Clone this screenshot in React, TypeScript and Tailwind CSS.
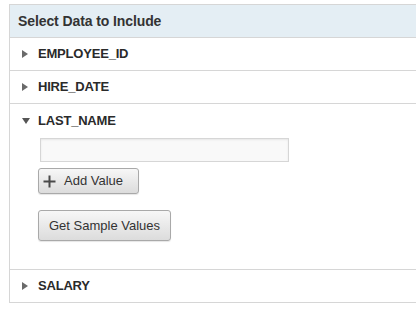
import React from "react";

const Right = () => (
  <svg width="6" height="8" viewBox="0 0 6 8" className="shrink-0">
    <path d="M0 0 L6 4 L0 8 Z" fill="#6a6a6a" />
  </svg>
);
const Down = () => (
  <svg width="8" height="6" viewBox="0 0 8 6" className="shrink-0">
    <path d="M0 0 L8 0 L4 6 Z" fill="#555" />
  </svg>
);

const Row = ({ label }: { label: string }) => (
  <div className="h-[33px] border-b border-[#d6d6d6] flex items-center pl-[12px] gap-[10px]">
    <Right />
    <span className="text-[13px] font-bold text-[#2a2a2a] tracking-[-0.2px]">{label}</span>
  </div>
);

export default function App() {
  return (
    <div className="w-[416px] h-[310px] bg-white overflow-hidden pt-[4px] pl-[9px]" style={{ fontFamily: '"Liberation Sans", Arial, sans-serif' }}>
      <div className="w-[420px] border-t border-l border-[#d6d6d6]">
        <div className="h-[33px] bg-[#e4eef4] border-b border-[#d6d6d6] flex items-center pl-[8px] pt-[1px]">
          <span className="text-[14px] font-bold text-[#333] tracking-[-0.1px]">Select Data to Include</span>
        </div>
        <Row label="EMPLOYEE_ID" />
        <Row label="HIRE_DATE" />
        <div className="h-[166px] border-b border-[#d6d6d6] pl-[12px]">
          <div className="h-[33px] flex items-center gap-[8px] pt-[1px]">
            <Down />
            <span className="text-[13px] font-bold text-[#2a2a2a] tracking-[-0.2px]">LAST_NAME</span>
          </div>
          <div className="pl-[18px] pt-[1px]">
            <div className="w-[249px] h-[24px] border border-[#d6d6d6] bg-[#f9f9f9] shadow-[inset_0_1px_2px_rgba(0,0,0,0.08)]" />
            <button className="mt-[6px] -ml-[2px] w-[101px] h-[26px] rounded-[3px] border border-[#a9a9a9] bg-gradient-to-b from-[#f7f7f7] to-[#dcdcdc] flex items-center pl-[4px] gap-[8px] text-[13px] text-[#333] shadow-[0_1px_1px_rgba(0,0,0,0.1)]">
              <svg width="13" height="13" viewBox="0 0 13 13">
                <path d="M6.5 0.5 V12.5 M0.5 6.5 H12.5" stroke="#4a4a4a" strokeWidth="2" />
              </svg>
              <span>Add Value</span>
            </button>
            <button className="mt-[16px] -ml-[2px] w-[133px] h-[31px] rounded-[3px] border border-[#a9a9a9] bg-gradient-to-b from-[#f7f7f7] to-[#dcdcdc] flex items-center justify-center text-[13px] text-[#333] shadow-[0_1px_1px_rgba(0,0,0,0.1)]">
              Get Sample Values
            </button>
          </div>
        </div>
        <Row label="SALARY" />
      </div>
    </div>
  );
}
